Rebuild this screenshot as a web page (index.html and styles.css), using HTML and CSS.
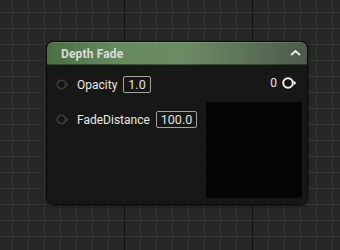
FILE: index.html
```html
<!DOCTYPE html>
<html>
<head>
<meta charset="utf-8">
<link rel="stylesheet" href="styles.css">
</head>
<body>
<div class="canvas">
  <div class="node">
    <div class="node-header">
      <span class="node-title">Depth Fade</span>
      <svg class="caret" width="11" height="6" viewBox="0 0 11 6"><path d="M1 5.2 L5.5 1 L10 5.2" fill="none" stroke="#f2f2f2" stroke-width="1.8"/></svg>
    </div>
    <div class="node-body">
      <div class="inputs">
        <div class="pin-row">
          <svg class="pin" width="13" height="11" viewBox="0 0 13 11"><circle cx="5.5" cy="5.5" r="4.2" fill="#141414" stroke="#3c3c3c" stroke-width="1.8"/><path d="M10.3 3.2 L12.6 5.5 L10.3 7.8 Z" fill="#3c3c3c"/></svg>
          <span class="label">Opacity</span>
          <span class="value">1.0</span>
        </div>
        <div class="pin-row">
          <svg class="pin" width="13" height="11" viewBox="0 0 13 11"><circle cx="5.5" cy="5.5" r="4.2" fill="#141414" stroke="#3c3c3c" stroke-width="1.8"/><path d="M10.3 3.2 L12.6 5.5 L10.3 7.8 Z" fill="#3c3c3c"/></svg>
          <span class="label">FadeDistance</span>
          <span class="value">100.0</span>
        </div>
      </div>
      <div class="outputs">
        <div class="out-row">
          <span class="label">0</span>
          <svg class="pin" width="15" height="12" viewBox="0 0 15 12"><circle cx="6" cy="6" r="4.8" fill="#141414" stroke="#f0f0f0" stroke-width="2"/><path d="M11.6 3.4 L14.4 6 L11.6 8.6 Z" fill="#f0f0f0"/></svg>
        </div>
        <div class="preview"></div>
      </div>
    </div>
  </div>
</div>
</body>
</html>
```

FILE: styles.css
```css
html, body {
  margin: 0;
  padding: 0;
}
body {
  width: 340px;
  height: 250px;
  overflow: hidden;
  font-family: Roboto, "Liberation Sans", sans-serif;
}
.canvas {
  width: 340px;
  height: 250px;
  box-sizing: border-box;
  padding: 41px 0 0 46px;
  background-color: #262626;
  background-image:
    linear-gradient(to right, #121212 1px, transparent 1px),
    linear-gradient(to right, #353535 1px, transparent 1px),
    linear-gradient(to bottom, #353535 1px, transparent 1px);
  background-size: 128px 100%, 16px 16px, 16px 16px;
  background-position: 124px 0, 12px 12px, 12px 12px;
}
.node {
  width: 262px;
  height: 164px;
  box-sizing: border-box;
  border: 1px solid #0b0b0b;
  border-radius: 7px;
  background: rgba(22, 23, 21, 0.94);
  box-shadow: 0 1px 3px rgba(0, 0, 0, 0.5);
  display: flex;
  flex-direction: column;
  overflow: hidden;
}
.node-header {
  height: 23px;
  flex: none;
  display: flex;
  align-items: center;
  justify-content: space-between;
  padding: 0 6px 0 14px;
  border-radius: 6px 6px 0 0;
  background: linear-gradient(to right, #4b6f45 0%, #678a5f 28%, #6c8b64 52%, #5b7157 78%, #4c5a4a 100%);
  box-shadow: inset 0 1px 0 rgba(255, 255, 255, 0.14), inset 0 -1px 0 rgba(0, 0, 0, 0.4);
}
.node-title {
  color: #dadcd8;
  font-size: 12px;
  font-weight: bold;
  letter-spacing: 0.15px;
}
.caret {
  display: block;
  margin-top: -1px;
}
.node-body {
  flex: 1;
  display: flex;
  justify-content: space-between;
  padding: 0 5px 0 9px;
}
.inputs {
  display: flex;
  flex-direction: column;
  gap: 18px;
  padding-top: 11px;
}
.pin-row {
  display: flex;
  align-items: center;
  height: 17px;
}
.pin-row .pin {
  display: block;
  margin-right: 8px;
}
.label {
  color: #e8e8e8;
  font-size: 12px;
}
.value {
  margin-left: 6px;
  height: 17px;
  box-sizing: border-box;
  border: 1px solid #a3a3a3;
  border-radius: 2px;
  padding: 0 4px;
  color: #e2e2e2;
  font-size: 12.5px;
  line-height: 15px;
}
.outputs {
  display: flex;
  flex-direction: column;
  align-items: flex-end;
  padding-top: 11px;
}
.out-row {
  display: flex;
  align-items: center;
  height: 14px;
  margin-right: 5px;
  gap: 5px;
}
.out-row .pin {
  display: block;
}
.preview {
  margin-top: 12px;
  width: 96px;
  height: 96px;
  background: #050505;
}
```
